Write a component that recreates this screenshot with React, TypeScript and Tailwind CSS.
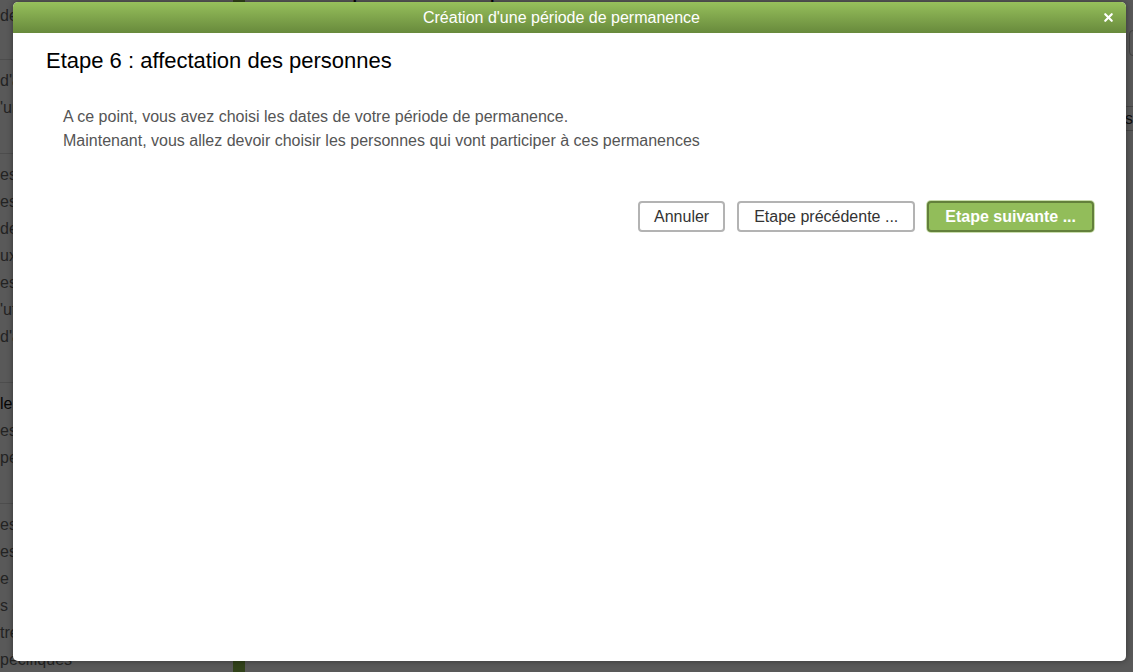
import React from 'react';
import { X } from 'lucide-react';

const SIDE_GROUPS: { items: string[]; strongFirst?: boolean }[] = [
  { items: ['des plannings'] },
  { items: ["d'astreinte", "'un service"] },
  { items: ['es équipes', 'es agents', 'des horaires', 'ux congés', 'es absences', "'utilisateurs", "d'accès"] },
  { items: ['le paramétrage', 'es options', 'pe de travail'], strongFirst: true },
  { items: ['es périodes', 'es modèles', 'e lien', 's composants', 'tre', 'pécifiques'] },
];

const Sidebar: React.FC = () => (
  <aside className="w-[233px] shrink-0 text-[16px] text-[#666]">
    {SIDE_GROUPS.map((g, gi) => (
      <div key={gi} className={`border-b border-[#ddd] ${gi === 0 ? 'pt-[2px] pb-[30px]' : 'pt-[7px] pb-[32px]'}`}>
        {g.items.map((t, i) => (
          <div
            key={i}
            className={`h-[27px] leading-[27px] whitespace-nowrap ${g.strongFirst && i === 0 ? 'text-[#111]' : ''}`}
          >
            {t}
          </div>
        ))}
      </div>
    ))}
  </aside>
);

const Modal: React.FC = () => (
  <div className="absolute left-[13px] top-[2px] w-[1113px] h-[659px] bg-white rounded-[5px] overflow-hidden shadow-[0_0_6px_rgba(0,0,0,0.4)] flex flex-col">
    <div className="relative h-[31px] shrink-0 flex items-center justify-center bg-gradient-to-b from-[#97c05c] to-[#688a3c]">
      <span className="text-white text-[16px] pr-[16px]">Création d'une période de permanence</span>
      <button className="absolute right-[11px] top-[9px] text-white">
        <X size={13} strokeWidth={4} />
      </button>
    </div>
    <div className="px-[33px] pt-[14px]">
      <h2 className="text-[22px] leading-[28px] text-black">Etape 6 : affectation des personnes</h2>
      <div className="mt-[30px] pl-[17px] text-[16px] leading-[24px] text-[#555]">
        <p>A ce point, vous avez choisi les dates de votre période de permanence.</p>
        <p>Maintenant, vous allez devoir choisir les personnes qui vont participer à ces permanences</p>
      </div>
      <div className="mt-[48px] flex justify-end gap-[12px] mr-[-1px]">
        <button className="h-[31px] px-[14px] rounded-[4px] border-2 border-[#b3b3b3] bg-white text-[16px] text-[#333]">
          Annuler
        </button>
        <button className="h-[31px] px-[15px] rounded-[4px] border-2 border-[#b3b3b3] bg-white text-[16px] text-[#333]">
          Etape précédente ...
        </button>
        <button className="h-[31px] px-[16px] rounded-[4px] border-2 border-[#63803b] bg-[#92bd5a] text-[16px] font-bold text-white shadow-[0_0_0_1px_#c9deac]">
          Etape suivante ...
        </button>
      </div>
    </div>
  </div>
);

export default function App() {
  return (
    <div className="relative w-full h-screen overflow-hidden bg-white font-['Liberation_Sans',Arial,sans-serif]">
      <div className="flex h-full">
        <Sidebar />
        <div className="w-[12px] bg-[#8fbf4f]" />
        <main className="flex-1 flex flex-col">
          <h1 className="-mt-[27px] text-[25px] leading-[30px] text-[#111] whitespace-nowrap">Liste des périodes de permanence</h1>
          <div className="mt-[27px] flex justify-end">
            <div className="h-[26px] w-[54px] mr-[-50px] rounded-[4px] border border-[#bbb]" />
          </div>
          <div className="mt-[50px] h-[25px] border-y border-[#ccc] text-right text-[16px] leading-[23px] text-[#333]">Dates</div>
        </main>
      </div>
      <div className="absolute inset-0 bg-black/65" />
      <Modal />
    </div>
  );
}
